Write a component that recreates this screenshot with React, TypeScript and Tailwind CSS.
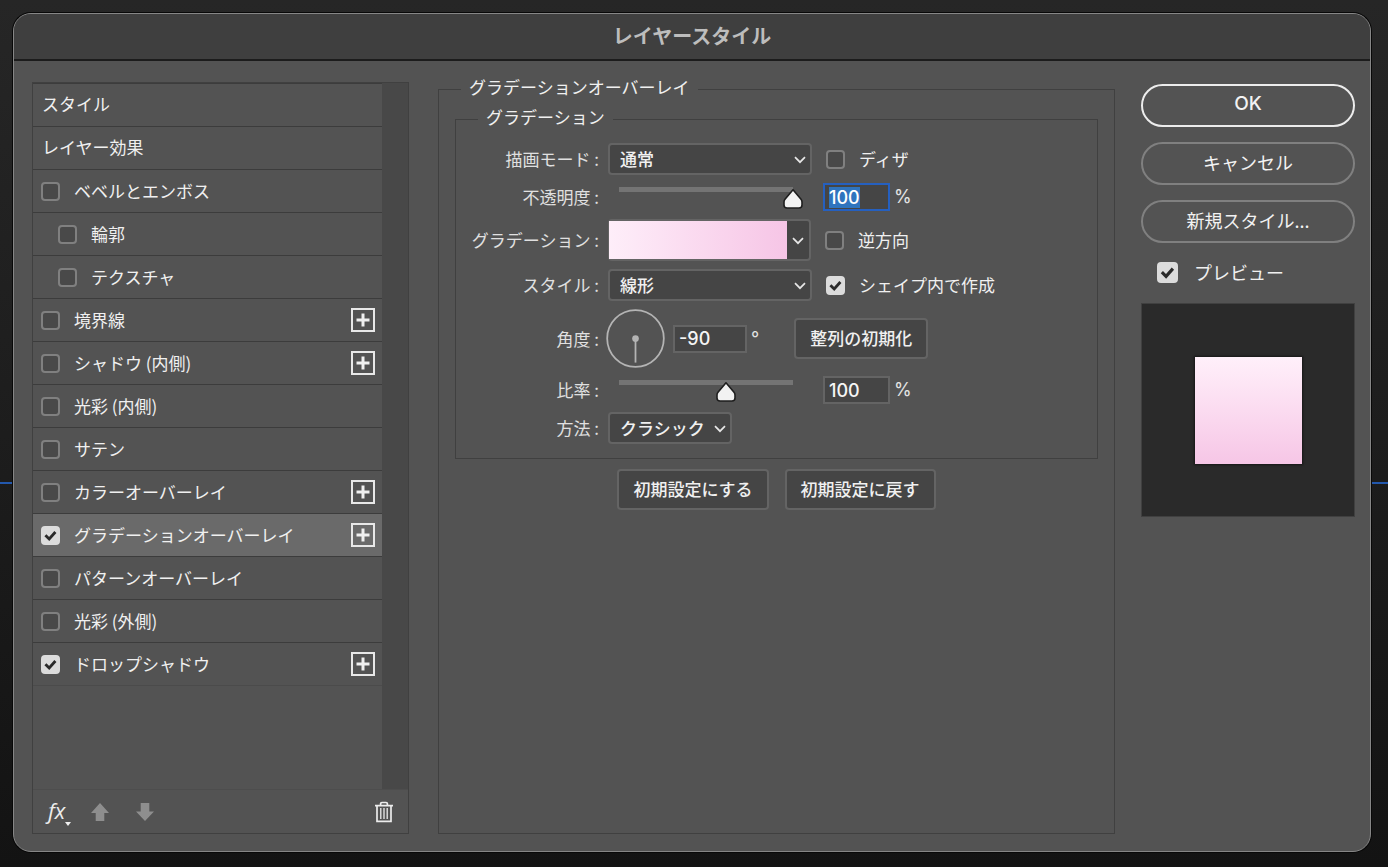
import { useEffect, useId, useRef, useState } from "react";
import type { ReactNode } from "react";

type Effect = {
  name: string;
  checked?: boolean;
  indented?: boolean;
  addable?: boolean;
  selected?: boolean;
};

const effects: Effect[] = [
  { name: "ベベルとエンボス" },
  { name: "輪郭", indented: true },
  { name: "テクスチャ", indented: true },
  { name: "境界線", addable: true },
  { name: "シャドウ (内側)", addable: true },
  { name: "光彩 (内側)" },
  { name: "サテン" },
  { name: "カラーオーバーレイ", addable: true },
  { name: "グラデーションオーバーレイ", addable: true, checked: true, selected: true },
  { name: "パターンオーバーレイ" },
  { name: "光彩 (外側)" },
  { name: "ドロップシャドウ", addable: true, checked: true },
];

function Checkbox({
  label,
  defaultChecked,
  large,
}: {
  label: string;
  defaultChecked?: boolean;
  large?: boolean;
}) {
  return (
    <label className={large ? "flex items-center gap-4 text-lg" : "flex items-center gap-[14px]"}>
      <span className="grid shrink-0 place-items-center">
        <input
          type="checkbox"
          defaultChecked={defaultChecked}
          className={`peer col-start-1 row-start-1 appearance-none rounded-[4px] border-2 border-[#808080] bg-[#494949] checked:border-[#dcdcdc] checked:bg-[#dcdcdc] ${
            large ? "size-[21px]" : "size-[19px]"
          }`}
        />
        <svg
          viewBox="0 0 19 19"
          className={`pointer-events-none invisible col-start-1 row-start-1 peer-checked:visible ${
            large ? "size-[21px]" : "size-[19px]"
          }`}
          fill="none"
          stroke="#2b2b2b"
          strokeWidth="2.8"
        >
          <path d="M4.4 9.2 8.2 13 14.4 6" />
        </svg>
      </span>
      <span>{label}</span>
    </label>
  );
}

function Chevron() {
  return (
    <svg viewBox="0 0 12 8" className="h-2 w-3" fill="none" stroke="#e6e6e6" strokeWidth="1.7">
      <path d="M1 1.2 6 6.2 11 1.2" />
    </svg>
  );
}

function Dropdown({ id, value, wide }: { id: string; value: string; wide?: boolean }) {
  return (
    <div className="grid items-center">
      <select
        id={id}
        className={`col-start-1 row-start-1 h-8 appearance-none rounded-[4px] border-2 border-[#646464] bg-[#454545] pl-[10px] font-medium text-[#f0f0f0] ${
          wide ? "w-[204px]" : "w-[124px]"
        }`}
      >
        <option>{value}</option>
      </select>
      <span className="pointer-events-none col-start-1 row-start-1 mr-[6px] justify-self-end pt-[2px]">
        <Chevron />
      </span>
    </div>
  );
}

function Slider({ id, initial, max }: { id: string; initial: number; max: number }) {
  const [value, setValue] = useState(initial);
  return (
    <div className="relative mr-[10px] ml-[11px] h-7 w-[174px]">
      <div className="mt-[4px] h-[5px] bg-[#747474]" />
      <svg
        viewBox="0 0 22 22"
        className="absolute top-[5px] size-[22px] -translate-x-1/2"
        style={{ left: `${(value / max) * 100}%` }}
      >
        <path
          d="M11 1.8 19 11.2Q20 12.4 20 14V17Q20 20 17 20H5Q2 20 2 17V14Q2 12.4 3 11.2Z"
          fill="#f2f2f2"
          stroke="#1e1e1e"
          strokeWidth="1.6"
          strokeLinejoin="round"
        />
      </svg>
      <input
        id={id}
        type="range"
        min={0}
        max={max}
        value={value}
        onChange={(e) => setValue(Number(e.target.value))}
        className="absolute inset-0 w-full opacity-0"
      />
    </div>
  );
}

function Row({ label, id, children }: { label: string; id: string; children: ReactNode }) {
  return (
    <div className="flex items-center">
      <label htmlFor={id} className="w-[143px] shrink-0 text-right text-[#e0e0e0]">
        {label} :
      </label>
      <div className="ml-[9px] flex items-center">{children}</div>
    </div>
  );
}

const numberInput =
  "h-7 border-2 border-[#646464] bg-[#454545] pl-1 font-[Inter,sans-serif] text-lg leading-[22px] font-medium text-[#f5f5f5] outline-none";

const unitText = "ml-1 font-[Inter,sans-serif] text-lg text-[#e4e4e4]";

const pushButton =
  "h-[41px] rounded-[4px] border-2 border-[#646464] bg-[#454545] px-[14px] pb-[2px] font-medium text-[#f0f0f0]";

const pillButton = "h-[43px] rounded-full border-2 pb-[3px] text-[#f2f2f2]";

function EffectRow({ effect }: { effect: Effect }) {
  return (
    <li
      className={`flex h-[43px] items-center justify-between border-b border-[#3c3c3c] pr-[7px] last:border-[#4b4b4b] ${
        effect.indented ? "pl-[25px]" : "pl-2"
      } ${effect.selected ? "bg-[#6a6a6a]" : ""}`}
    >
      <Checkbox label={effect.name} defaultChecked={effect.checked} />
      {effect.addable && (
        <button
          type="button"
          aria-label={`${effect.name}を追加`}
          className="grid size-6 place-items-center border-2 border-[#e8e8e8]"
        >
          <svg viewBox="0 0 14 14" className="size-[14px]" stroke="#f0f0f0" strokeWidth="3">
            <path d="M7 0.5V13.5M0.5 7H13.5" />
          </svg>
        </button>
      )}
    </li>
  );
}

function EffectList() {
  return (
    <aside className="mt-[21px] flex w-[377px] shrink-0 flex-col border border-[#404040]">
      <div className="flex flex-1 border-b border-[#4d4d4d]">
        <div className="flex-1">
          <h2 className="flex h-11 items-center border-t border-b border-[#3c3c3c] pb-[2px] pl-[9px]">
            スタイル
          </h2>
          <h2 className="flex h-[43px] items-center border-b border-[#3c3c3c] pb-[2px] pl-[9px]">
            レイヤー効果
          </h2>
          <ul>
            {effects.map((effect) => (
              <EffectRow key={effect.name} effect={effect} />
            ))}
          </ul>
        </div>
        <div className="w-[26px] bg-[#484848]" />
      </div>
      <div className="flex h-[43px] items-center pr-[14px] pl-[15px]">
        <button type="button" aria-label="効果を追加" className="flex items-end pb-[2px]">
          <span className="pb-[2px] font-['Open_Sans',sans-serif] text-[22px] leading-7 text-[#ececec] italic">
            fx
          </span>
          <svg viewBox="0 0 6 4" className="h-1 w-[6px]" fill="#f0f0f0">
            <path d="M0 0H6L3 4Z" />
          </svg>
        </button>
        <button type="button" aria-label="上へ" className="ml-5">
          <svg viewBox="0 0 18 18" className="size-[18px]" fill="#8e8e8e">
            <path d="M9 0 18 10H13.3V18H4.7V10H0Z" />
          </svg>
        </button>
        <button type="button" aria-label="下へ" className="ml-[27px]">
          <svg viewBox="0 0 18 18" className="size-[18px]" fill="#8e8e8e">
            <path d="M9 18 0 8.5H4.7V0H13.3V8.5H18Z" />
          </svg>
        </button>
        <button type="button" aria-label="削除" className="ml-auto">
          <svg viewBox="0 0 20 22" className="h-[22px] w-5" fill="none" stroke="#ececec">
            <path
              d="M1 4.7H19M6.6 4.2V2.8Q6.6 1.5 8 1.5H12Q13.4 1.5 13.4 2.8V4.2M3 5V20.4H17V5"
              strokeWidth="1.7"
            />
            <path d="M6.8 7V18M10 7V18M13.2 7V18" strokeWidth="1.3" />
          </svg>
        </button>
      </div>
    </aside>
  );
}

function GradientSettings() {
  const id = useId();
  const opacityRef = useRef<HTMLInputElement>(null);

  useEffect(() => {
    opacityRef.current?.focus();
    opacityRef.current?.select();
  }, []);

  return (
    <fieldset className="mt-4 ml-[29px] min-w-0 flex-1 border border-[#404040] px-4">
      <legend className="ml-[6px] h-6 px-2 leading-5">グラデーションオーバーレイ</legend>
      <fieldset className="mt-[6px] min-w-0 border border-[#404040] pt-3 pb-[14px]">
        <legend className="ml-[22px] h-6 px-2 leading-5">グラデーション</legend>
        <div className="flex flex-col gap-2">
          <Row label="描画モード" id={`${id}mode`}>
            <Dropdown id={`${id}mode`} value="通常" wide />
            <div className="ml-[14px]">
              <Checkbox label="ディザ" />
            </div>
          </Row>
          <Row label="不透明度" id={`${id}opacity`}>
            <Slider id={`${id}opacity`} initial={100} max={100} />
            <input
              ref={opacityRef}
              type="text"
              aria-label="不透明度 (%)"
              defaultValue="100"
              className={`${numberInput} ml-5 w-[67px] focus:border-[#2560c0] selection:bg-[#2f74be] selection:text-white`}
            />
            <span className={unitText}>%</span>
          </Row>
          <Row label="グラデーション" id={`${id}gradient`}>
            <button
              id={`${id}gradient`}
              type="button"
              className="flex h-[42px] w-[203px] items-center rounded-[4px] border-2 border-l border-[#646464] bg-[#454545]"
            >
              <span className="h-full flex-1 bg-linear-to-r from-[#feeef9] to-[#f6c5e6]" />
              <span className="grid w-[22px] place-items-center pt-[2px]">
                <Chevron />
              </span>
            </button>
            <div className="ml-[14px]">
              <Checkbox label="逆方向" />
            </div>
          </Row>
          <Row label="スタイル" id={`${id}style`}>
            <Dropdown id={`${id}style`} value="線形" wide />
            <div className="ml-[14px]">
              <Checkbox label="シェイプ内で作成" defaultChecked />
            </div>
          </Row>
          <Row label="角度" id={`${id}angle`}>
            <svg viewBox="0 0 60 60" className="-ml-[2px] size-[59px]" fill="none" stroke="#b4b4b4">
              <circle cx="30" cy="30" r="28.8" strokeWidth="1.8" />
              <circle cx="30" cy="30" r="3.4" fill="#b4b4b4" stroke="none" />
              <path d="M30 30V54.5" strokeWidth="1.8" />
            </svg>
            <input
              id={`${id}angle`}
              type="text"
              defaultValue="-90"
              className={`${numberInput} ml-2 w-[74px]`}
            />
            <span className={unitText}>°</span>
            <button type="button" className={`${pushButton} ml-[35px]`}>
              整列の初期化
            </button>
          </Row>
          <Row label="比率" id={`${id}scale`}>
            <Slider id={`${id}scale`} initial={100} max={163} />
            <input
              type="text"
              aria-label="比率 (%)"
              defaultValue="100"
              className={`${numberInput} ml-5 w-[67px]`}
            />
            <span className={unitText}>%</span>
          </Row>
          <Row label="方法" id={`${id}method`}>
            <Dropdown id={`${id}method`} value="クラシック" />
          </Row>
        </div>
      </fieldset>
      <div className="mt-[10px] flex justify-center gap-4">
        <button type="button" className={pushButton}>
          初期設定にする
        </button>
        <button type="button" className={pushButton}>
          初期設定に戻す
        </button>
      </div>
    </fieldset>
  );
}

function Actions() {
  return (
    <div className="mt-[23px] ml-[26px] flex w-[214px] shrink-0 flex-col">
      <div className="flex flex-col gap-[15px]">
        <button
          type="button"
          className={`${pillButton} border-[#ececec] font-[Inter,sans-serif] text-[19px] font-medium`}
        >
          OK
        </button>
        <button type="button" className={`${pillButton} border-[#808080] text-lg`}>
          キャンセル
        </button>
        <button type="button" className={`${pillButton} border-[#808080] text-lg`}>
          新規スタイル...
        </button>
      </div>
      <div className="mt-[15px] ml-4">
        <Checkbox label="プレビュー" defaultChecked large />
      </div>
      <div className="mt-[17px] grid aspect-square place-items-center border border-[#404040] bg-[#2a2a2a]">
        <div className="size-[107px] bg-linear-to-b from-[#fff0fa] to-[#f6c6e6] shadow-[0_0_2px_1px_#161616]" />
      </div>
    </div>
  );
}

export default function App() {
  return (
    <div className="relative flex min-h-screen flex-col bg-linear-to-b from-[#262626] via-[#1d1d1d] to-[#131313] pt-[13px] pr-[17px] pb-[15px] pl-[13px] font-['Noto_Sans_CJK_JP',sans-serif] text-[17px] leading-6 text-[#f0f0f0]">
      <div className="absolute inset-x-0 top-[482px] h-[2px] bg-[#2358ad]" />
      <main className="relative flex flex-1 flex-col overflow-hidden rounded-[18px] border border-[#868686] bg-[#535353] shadow-[0_0_0_1px_#080808]">
        <header className="flex h-[47px] shrink-0 items-center justify-center border-b-2 border-[#1c1c1c] bg-[#3f3f3f] pb-[2px]">
          <h1 className="text-xl font-bold text-[#bdbdbd]">レイヤースタイル</h1>
        </header>
        <div className="flex flex-1 pr-[15px] pb-[17px] pl-[18px]">
          <EffectList />
          <GradientSettings />
          <Actions />
        </div>
      </main>
    </div>
  );
}
